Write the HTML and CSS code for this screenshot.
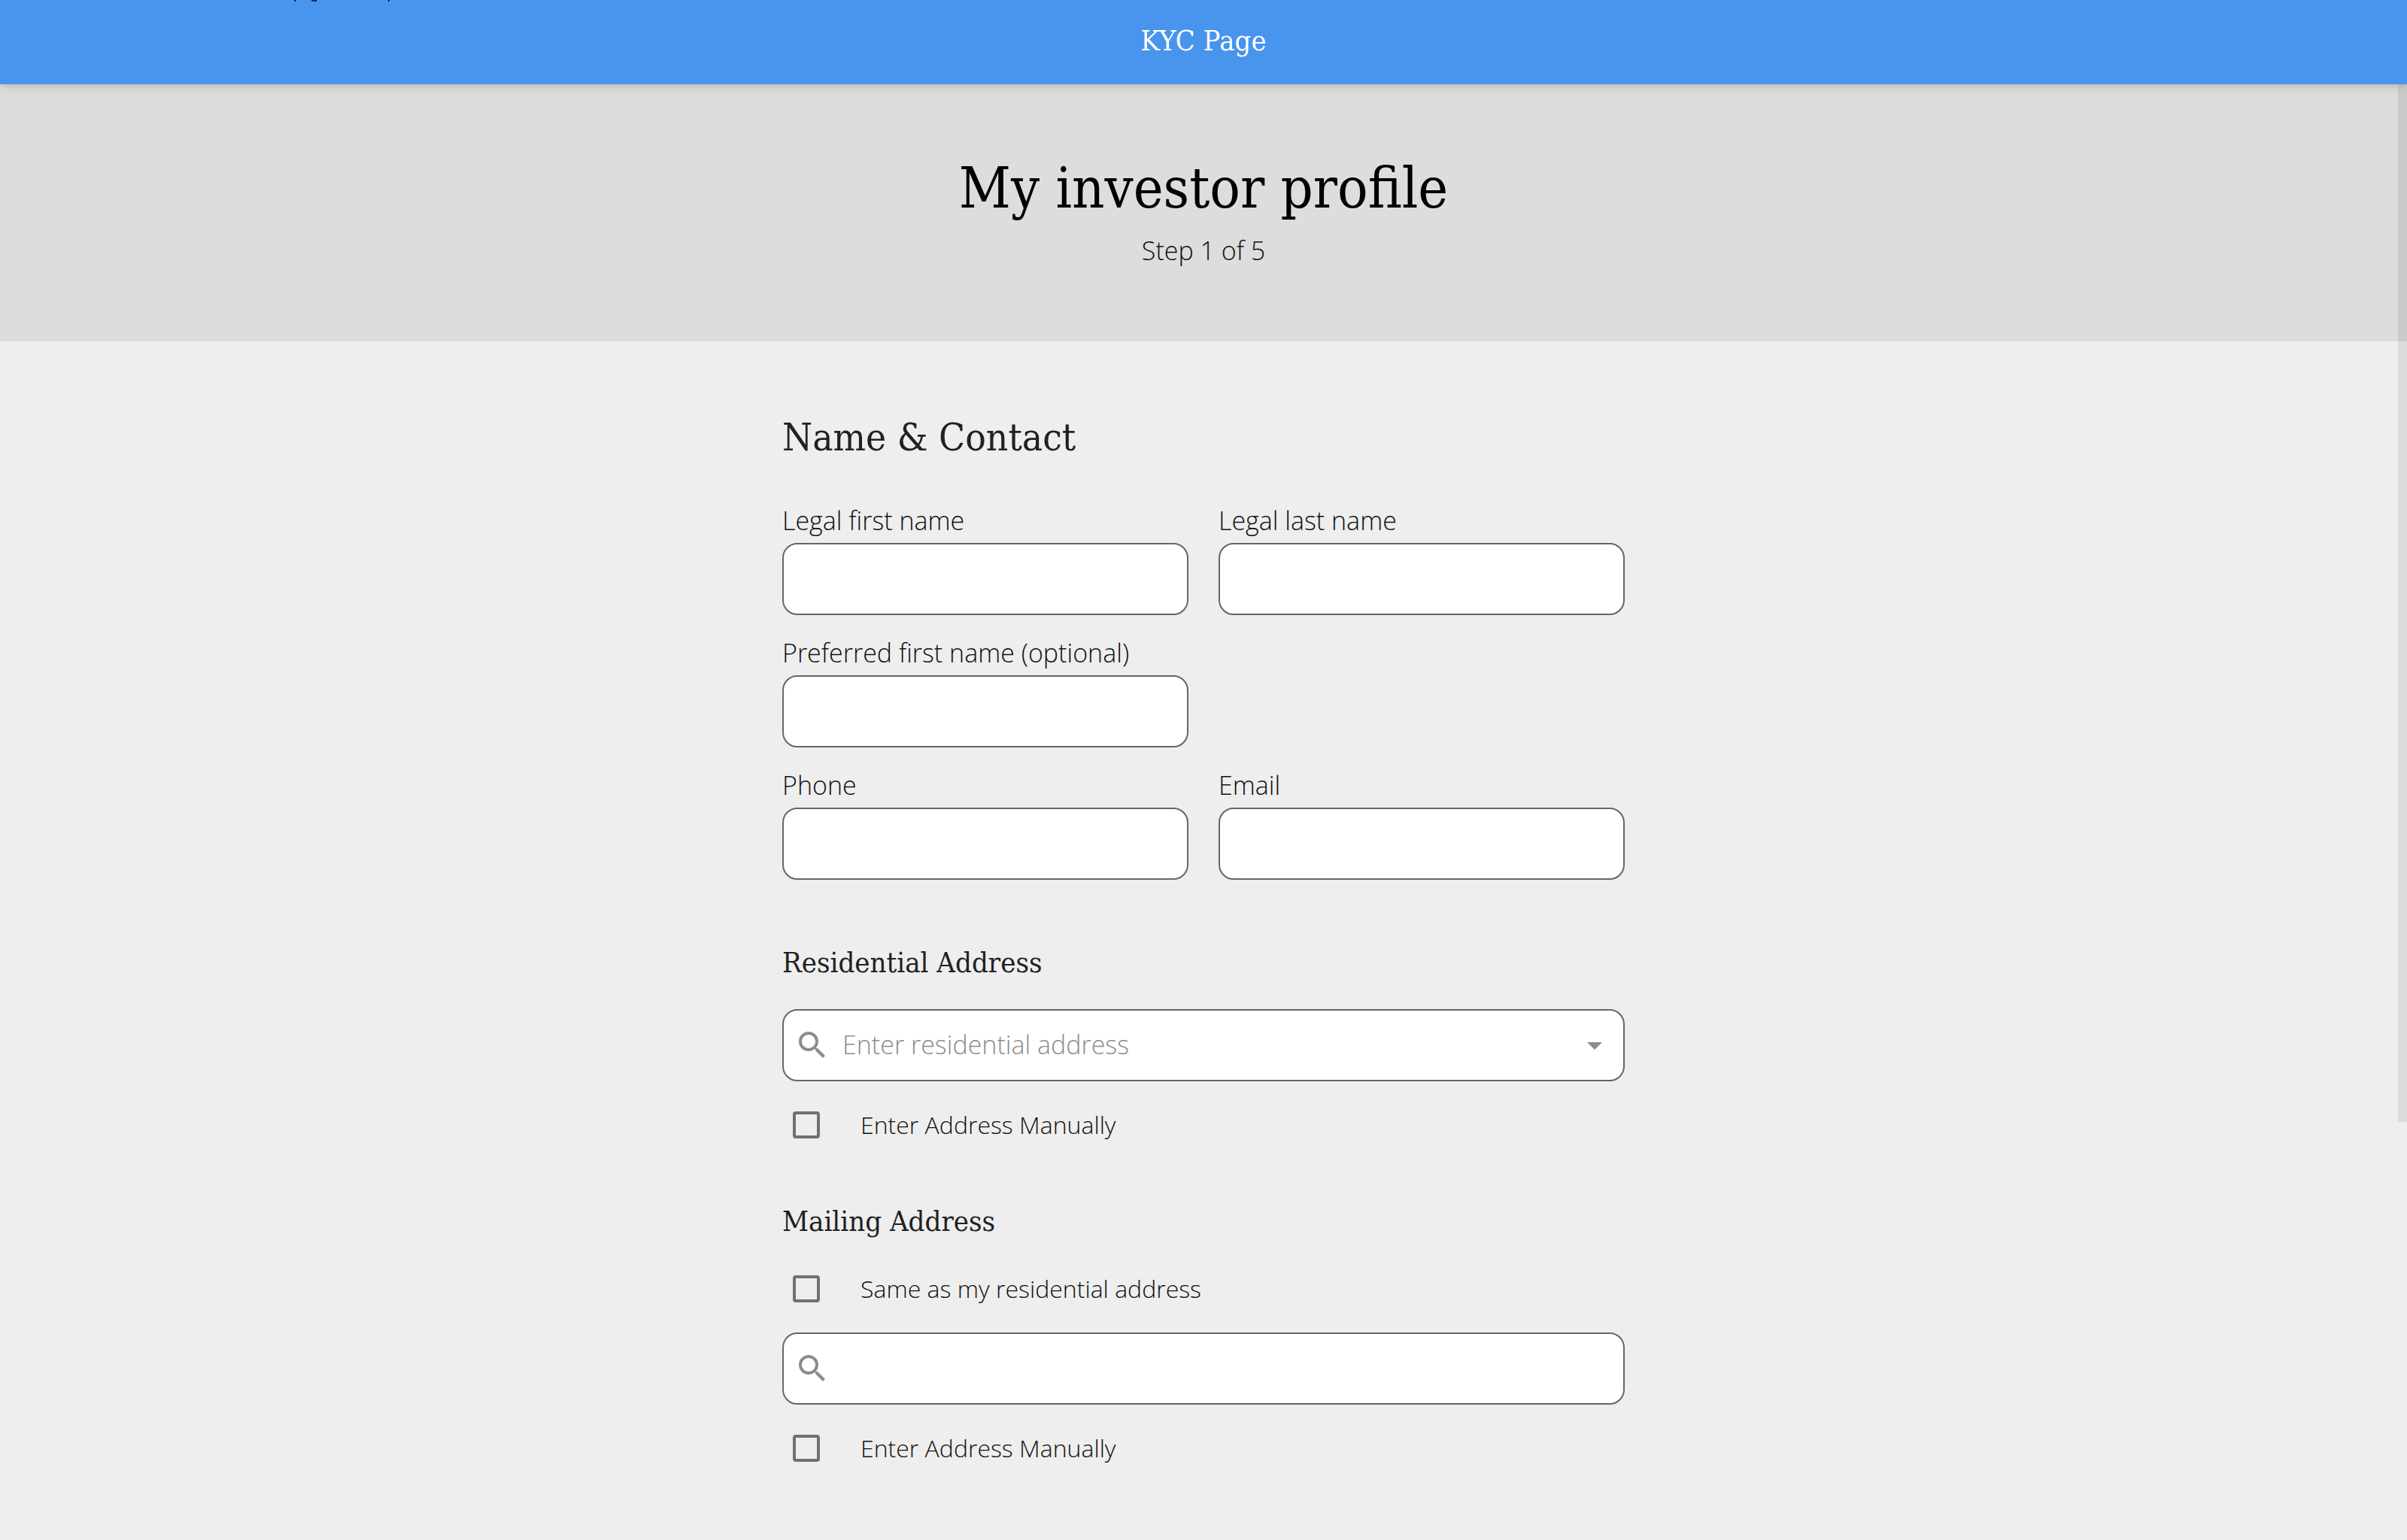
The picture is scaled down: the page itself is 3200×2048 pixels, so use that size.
FILE: index.html
```html
<!DOCTYPE html>
<html lang="en">
<head>
<meta charset="utf-8">
<meta name="viewport" content="width=device-width, initial-scale=1">
<title>KYC Page</title>
<link rel="stylesheet" href="styles.css">
</head>
<body>
<header class="topbar">
  <span class="topbar-note">page is a sample</span>
  <span class="topbar-title">KYC Page</span>
</header>
<div class="banner">
  <h1 class="banner-title">My investor profile</h1>
  <p class="banner-step">Step 1 of 5</p>
</div>
<main>
  <form class="form">
    <h2 class="form-title">Name &amp; Contact</h2>
    <div class="grid">
      <div class="field"><label class="label" for="first">Legal first name</label><input class="box" id="first" type="text"></div>
      <div class="field"><label class="label" for="last">Legal last name</label><input class="box" id="last" type="text"></div>
      <div class="field field-alone"><label class="label" for="preferred">Preferred first name (optional)</label><input class="box" id="preferred" type="text"></div>
      <div class="field"><label class="label" for="phone">Phone</label><input class="box" id="phone" type="tel"></div>
      <div class="field"><label class="label" for="email">Email</label><input class="box" id="email" type="email"></div>
    </div>

    <section class="section">
      <h3 class="section-title" id="res-title">Residential Address</h3>
      <div class="box search">
        <svg class="icon" viewBox="0 0 24 24" aria-hidden="true"><path d="M15.5 14h-.79l-.28-.27A6.471 6.471 0 0 0 16 9.5 6.5 6.5 0 1 0 9.5 16c1.61 0 3.09-.59 4.23-1.57l.27.28v.79l5 4.99L20.49 19l-4.99-5zm-6 0C7.01 14 5 11.99 5 9.5S7.01 5 9.5 5 14 7.01 14 9.5 11.99 14 9.5 14z"/></svg>
        <input class="search-input" type="text" aria-labelledby="res-title" placeholder="Enter residential address">
        <button class="arrow" type="button" aria-label="Show addresses"><svg class="icon" viewBox="0 0 24 24" aria-hidden="true"><path d="M7 10l5 5 5-5z"/></svg></button>
      </div>
      <label class="check"><input class="check-box" type="checkbox"><span>Enter Address Manually</span></label>
    </section>

    <section class="section">
      <h3 class="section-title" id="mail-title">Mailing Address</h3>
      <label class="check check-first"><input class="check-box" type="checkbox"><span>Same as my residential address</span></label>
      <div class="box search">
        <svg class="icon" viewBox="0 0 24 24" aria-hidden="true"><path d="M15.5 14h-.79l-.28-.27A6.471 6.471 0 0 0 16 9.5 6.5 6.5 0 1 0 9.5 16c1.61 0 3.09-.59 4.23-1.57l.27.28v.79l5 4.99L20.49 19l-4.99-5zm-6 0C7.01 14 5 11.99 5 9.5S7.01 5 9.5 5 14 7.01 14 9.5 11.99 14 9.5 14z"/></svg>
        <input class="search-input" type="text" aria-labelledby="mail-title">
      </div>
      <label class="check"><input class="check-box" type="checkbox"><span>Enter Address Manually</span></label>
    </section>
  </form>
</main>
<div class="scroll-thumb"></div>
</body>
</html>
```
FILE: styles.css
```css
* { box-sizing: border-box; }

html { scrollbar-width: none; }

body {
  margin: 0;
  background: #eeeeee;
  color: #111111;
  font-family: "Open Sans", "Noto Sans", sans-serif;
  font-weight: 300;
  font-size: 34px;
  line-height: 40px;
}

h1, h2, h3, p { margin: 0; }

.topbar,
.banner-title,
.form-title,
.section-title {
  color: #212121;
  font-family: "DejaVu Serif Condensed", "DejaVu Serif", serif;
  font-weight: 400;
}

.topbar {
  position: sticky;
  top: 0;
  z-index: 2;
  display: flex;
  align-items: center;
  justify-content: center;
  height: 112px;
  padding-bottom: 4px;
  background: #4994ec;
  color: #ffffff;
  font-size: 38px;
  box-shadow: 0 4px 8px -2px rgba(0, 0, 0, 0.12), 0 2px 20px rgba(0, 0, 0, 0.1);
}

.topbar-note {
  position: absolute;
  top: -19px;
  left: 390px;
  color: #000000;
  font: 20px/20px "Liberation Sans", sans-serif;
}

.banner {
  padding: 94px 40px 98px;
  background: #dddddd;
  text-align: center;
}

.banner-title {
  color: #000000;
  font-size: 75px;
  line-height: 88px;
}

.banner-step { margin-top: 16px; line-height: 46px; }

.form {
  max-width: 1200px;
  margin: 0 auto;
  padding: 96px 40px;
}

.form-title { font-size: 51px; line-height: 64px; }

.grid {
  display: grid;
  grid-template-columns: 1fr 1fr;
  gap: 30px 40px;
  margin-top: 58px;
}

.field {
  display: flex;
  flex-direction: column;
  gap: 10px;
}

.field-alone { grid-column: 1; }
.field-alone + .field { grid-column: 1; }

.box {
  width: 100%;
  height: 96px;
  padding: 0 24px;
  border: 2px solid #666666;
  border-radius: 20px;
  background: #ffffff;
  color: inherit;
  font: inherit;
}

.section { margin-top: 88px; }

.section-title {
  margin-bottom: 40px;
  font-size: 38px;
  line-height: 44px;
}

.search {
  display: flex;
  align-items: center;
  gap: 16px;
  padding: 0 14px;
}

.icon {
  display: block;
  flex: none;
  width: 48px;
  height: 48px;
  fill: #8c8c8c;
}

.search-input {
  flex: 1;
  min-width: 0;
  height: 100%;
  padding: 0 0 2px;
  border: 0;
  background: none;
  color: inherit;
  font: inherit;
  outline: 0;
}

.search-input::placeholder { color: #8c8c8c; opacity: 1; }

.arrow {
  padding: 0;
  border: 0;
  background: none;
}

.check {
  display: flex;
  align-items: center;
  gap: 54px;
  margin-top: 40px;
  padding-left: 14px;
  font-size: 32px;
  line-height: 36px;
}

.check-first { margin: 50px 0 40px; }

.check-box {
  appearance: none;
  flex: none;
  width: 36px;
  height: 36px;
  margin: 0;
  border: 4px solid #707070;
  border-radius: 4px;
}

.scroll-thumb {
  position: fixed;
  top: 0;
  right: 0;
  bottom: 556px;
  z-index: 1;
  width: 12px;
  background: rgba(0, 0, 0, 0.08);
}
```
